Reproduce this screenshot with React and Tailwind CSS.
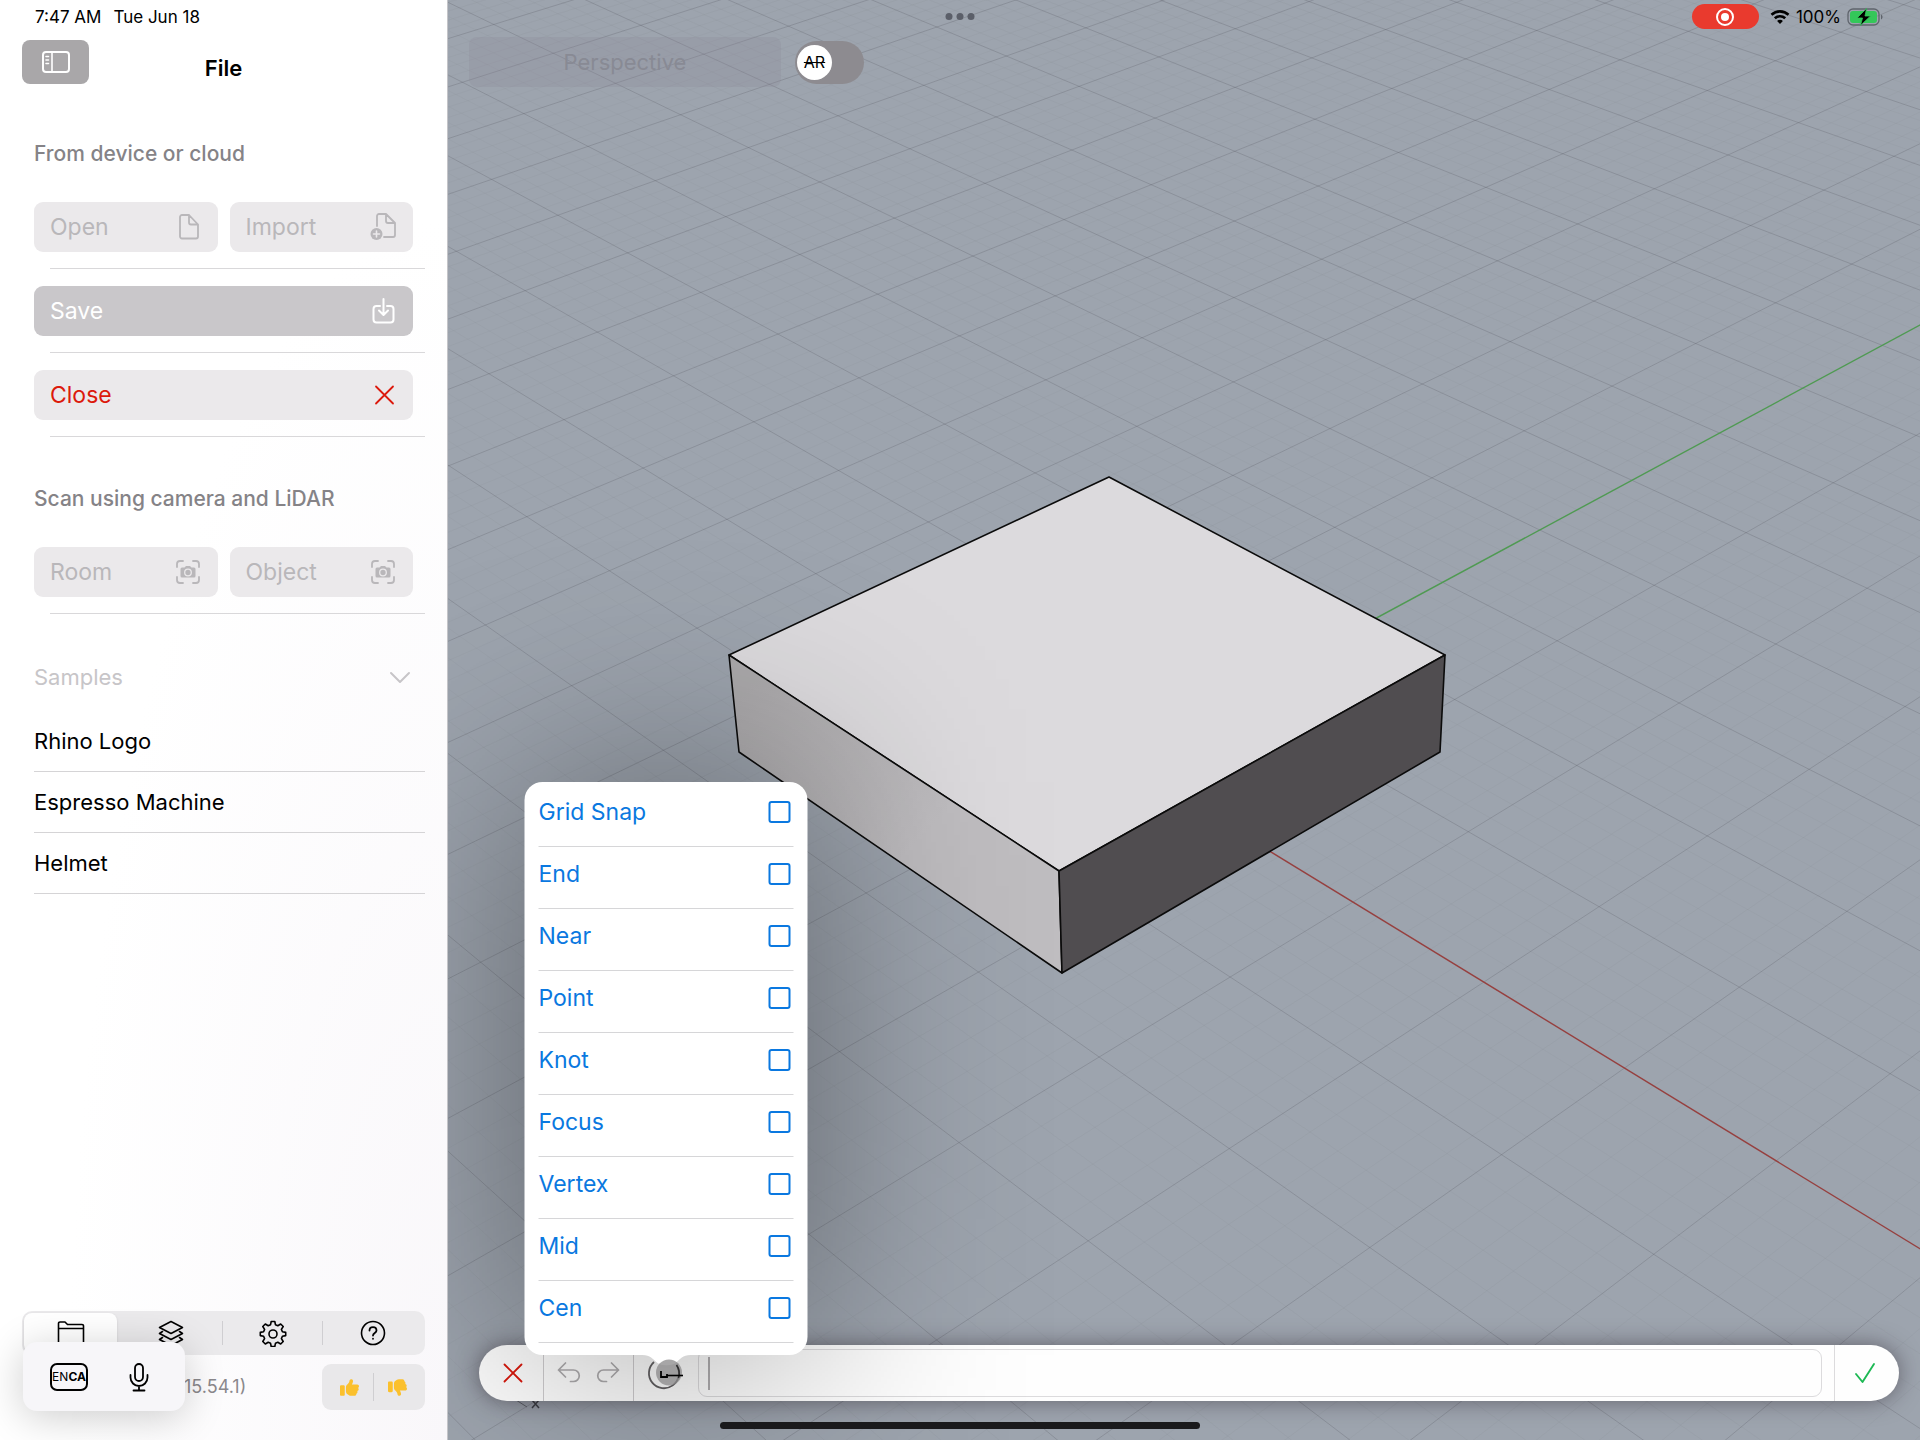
import { useState } from 'react';
import { FaThumbsUp, FaThumbsDown } from 'react-icons/fa6';

const SNAPS = ['Grid Snap', 'End', 'Near', 'Point', 'Knot', 'Focus', 'Vertex', 'Mid', 'Cen'];
const SAMPLES = ['Rhino Logo', 'Espresso Machine', 'Helmet'];

// Perspective of the construction plane: origin, the two vanishing points, size of one major cell
const ORIGIN = [1117, 757.8];
const VP_X = [-2255, -1304];
const VP_Y = [5147, -1414];
const STEP_X = 0.0327;
const STEP_Y = 0.0293;

function project(i, j) {
  const s = i * STEP_X;
  const t = j * STEP_Y;
  const w = 1 + s + t;
  return [0, 1].map(k => ((ORIGIN[k] + s * VP_X[k] + t * VP_Y[k]) / w).toFixed(1)).join(' ');
}

function gridPath(major) {
  const parts = [];
  for (let n = -45; n <= 85; n++) {
    if ((n % 5 === 0) !== major || n === 0) continue;
    const v = n / 5;
    parts.push(`M${project(v, -9)}L${project(v, 17)}`, `M${project(-9, v)}L${project(17, v)}`);
  }
  // the halves of the axes that are not coloured
  if (major) parts.push(`M${project(0, 0)}L${project(17, 0)}`, `M${project(0, 0)}L${project(0, -9)}`);
  return parts.join('');
}

const MAJOR = gridPath(true);
const MINOR = gridPath(false);

function Icon({ children, className = 'size-7', width = 1.5, box = 28 }) {
  return (
    <svg viewBox={`0 0 ${box} ${box}`} className={className} fill="none" stroke="currentColor" strokeWidth={width}
      strokeLinecap="round" strokeLinejoin="round" aria-hidden="true">
      {children}
    </svg>
  );
}

const SidebarIcon = () => (
  <Icon className="size-8" width={2} box={32}>
    <rect x="3" y="6" width="26" height="20" rx="3" />
    <path d="M12 6v20M6 10.500h2.500M6 14h2.500M6 17.500h2.500" strokeWidth="1.600" />
  </Icon>
);

const FileIcon = () => (
  <Icon width={1.8}>
    <path d="M8 2h7l9 9.500V23.500a2 2 0 0 1-2 2H8a2 2 0 0 1-2-2V4a2 2 0 0 1 2-2M15 2v7.500a2 2 0 0 0 2 2H24" />
  </Icon>
);

const ImportIcon = () => (
  <Icon width={1.8}>
    <path d="M8 13V3a2 2 0 0 1 2-2h7l9 9v12a2 2 0 0 1-2 2h-9M17 1v7a2 2 0 0 0 2 2h7" />
    <circle cx="7.500" cy="21" r="6" fill="currentColor" stroke="none" />
    <path d="M7.500 18v6M4.500 21h6" stroke="#ebe9eb" strokeWidth="1.600" />
  </Icon>
);

const SaveIcon = () => (
  <Icon width={2}>
    <path d="M11 9H7.500a3 3 0 0 0-3 3v10.500a3 3 0 0 0 3 3h14a3 3 0 0 0 3-3V12a3 3 0 0 0-3-3H18M14.500 2v15.500M10 13.500l4.500 4.500 4.500-4.500" />
  </Icon>
);

const CrossIcon = () => (
  <Icon width={1.8}>
    <path d="M7 5.500l17 17M24 5.500l-17 17" />
  </Icon>
);

const CameraIcon = () => (
  <Icon width={1.8}>
    <path d="M3 9V6a3 3 0 0 1 3-3h3M19 3h3a3 3 0 0 1 3 3v3M25 19v3a3 3 0 0 1-3 3h-3M9 25H6a3 3 0 0 1-3-3v-3" />
    <path d="M8 9.500h2.500L12 8h4l1.500 1.500H20a1.500 1.500 0 0 1 1.500 1.500v7a1.500 1.500 0 0 1-1.500 1.500H8A1.500 1.500 0 0 1 6.500 18v-7A1.500 1.500 0 0 1 8 9.500z" fill="currentColor" stroke="none" />
    <circle cx="14" cy="14.500" r="3.300" stroke="#ebe9eb" strokeWidth="1.300" />
  </Icon>
);

const TABS = [
  {
    label: 'File',
    icon: <path d="M1.500 26V4.500a1.500 1.500 0 0 1 1.500-1.500h5l2.500 2.500H25a1.500 1.500 0 0 1 1.500 1.500v19M1.500 9.500h25" />,
  },
  {
    label: 'Layers',
    icon: (
      <>
        <path d="M14 2.500L25.500 8.500 14 14.500 2.500 8.500z" />
        <path d="M5.500 12.500L2.500 14.500 14 20.500l11.500-6-3-2M5.500 18.500L2.500 20.500 14 26.500l11.500-6-3-2" />
      </>
    ),
  },
  {
    label: 'Settings',
    icon: (
      <>
        <path d="M12.200 2.500h3.600l.700 3.300 2.300 1 2.900-1.800 2.500 2.500-1.800 2.900 1 2.300 3.300.700v3.200l-3.300.700-1 2.300 1.800 2.900-2.500 2.500-2.900-1.800-2.300 1-.700 3.300h-3.600l-.700-3.300-2.300-1-2.900 1.800-2.500-2.500 1.800-2.900-1-2.300-3.300-.700v-3.200l3.300-.700 1-2.300-1.800-2.900 2.500-2.500 2.900 1.800 2.300-1z" />
        <circle cx="14" cy="15" r="4" />
      </>
    ),
  },
  {
    label: 'Help',
    icon: (
      <>
        <circle cx="14" cy="14" r="11.500" />
        <path d="M10.500 11.500c0-4.500 7-4.500 7 0 0 2.500-3.500 2.500-3.500 5M14 19.700v.100" strokeWidth="1.800" />
      </>
    ),
  },
];

function PanelButton({ label, icon, tone = 'muted' }) {
  const tones = {
    muted: 'bg-[#ebe9eb] text-[#b9b7ba]',
    solid: 'bg-[#c9c7ca] text-white',
    danger: 'bg-[#ebe9eb] text-[#dc190c]',
  };
  return (
    <button type="button" className={`flex h-[50px] flex-1 items-center justify-between rounded-[9px] px-4 text-[23px] leading-7 ${tones[tone]}`}>
      {label}
      {icon}
    </button>
  );
}

function PanelRow({ children }) {
  return (
    <div>
      <div className="flex gap-3 pt-[17px] pr-3 pb-4">{children}</div>
      <hr className="ml-4 border-[#d9d8da]" />
    </div>
  );
}

function Sidebar() {
  const [tab, setTab] = useState('File');
  return (
    <aside className="relative flex w-[448px] shrink-0 flex-col border-r border-[#c4c4c8] bg-[radial-gradient(ellipse_at_bottom_right,#f9f7fa,#ffffff_60%)] pr-[22px] pl-[22px]">
      <div className="flex h-[33px] items-center gap-3 pl-[13px] text-[17px] leading-5">
        <time>7:47 AM</time>
        <span>Tue Jun 18</span>
      </div>
      <header className="grid grid-cols-[67px_1fr_67px] items-start pt-[7px]">
        <button type="button" aria-label="Toggle sidebar" className="flex h-11 items-center justify-center rounded-lg bg-[#a9a7a9] text-white">
          <SidebarIcon />
        </button>
        <h1 className="pt-[14px] text-center text-[22px] leading-7 font-semibold">File</h1>
      </header>

      <div className="pl-3">
        <h2 className="mt-14 mb-[17px] text-[21px] leading-7 font-medium text-[#858387]">From device or cloud</h2>
        <PanelRow>
          <PanelButton label="Open" icon={<FileIcon />} />
          <PanelButton label="Import" icon={<ImportIcon />} />
        </PanelRow>
        <PanelRow>
          <PanelButton label="Save" icon={<SaveIcon />} tone="solid" />
        </PanelRow>
        <PanelRow>
          <PanelButton label="Close" icon={<CrossIcon />} tone="danger" />
        </PanelRow>

        <h2 className="mt-12 mb-[17px] text-[21px] leading-7 font-medium text-[#858387]">Scan using camera and LiDAR</h2>
        <PanelRow>
          <PanelButton label="Room" icon={<CameraIcon />} />
          <PanelButton label="Object" icon={<CameraIcon />} />
        </PanelRow>

        <button type="button" className="mt-[49px] flex w-full items-center justify-between pr-[11px] text-[22px] leading-7 text-[#c7c5c8]">
          Samples
          <Icon>
            <path d="M5 10l9 9 9-9" strokeWidth="2" />
          </Icon>
        </button>
        <ul className="mt-5">
          {SAMPLES.map(name => (
            <li key={name} className="border-b border-[#d5d4d6]">
              <button type="button" className="flex h-[60px] w-full items-center text-[22px] leading-7">{name}</button>
            </li>
          ))}
        </ul>
      </div>

      <footer className="mt-auto pb-[30px]">
        <nav className="flex h-11 rounded-[10px] bg-[#ebeaec] p-0.5">
          {TABS.map((t, i) => (
            <div key={t.label} className={`flex items-center ${i === 0 ? 'mr-1 w-[93px]' : 'flex-1'}`}>
              {i > 1 && <span className="h-6 w-px bg-[#cfced1]" />}
              <button type="button" aria-label={t.label} onClick={() => setTab(t.label)}
                className={`flex h-10 flex-1 items-center justify-center rounded-lg ${tab === t.label ? 'bg-white shadow' : ''}`}>
                <Icon width={1.6}>{t.icon}</Icon>
              </button>
            </div>
          ))}
        </nav>
        <div className="mt-[9px] flex h-[46px] items-center justify-between">
          <span className="pl-[162px] text-[18px] leading-6 text-[#8a888c]">15.54.1)</span>
          <div className="flex h-full w-[103px] items-center rounded-[9px] bg-[#e9e8ea] text-[#fbc02d]">
            <button type="button" aria-label="Good" className="flex flex-1 justify-center pl-1"><FaThumbsUp className="size-[19px]" /></button>
            <span className="h-7 w-px bg-[#cfced1]" />
            <button type="button" aria-label="Bad" className="flex flex-1 justify-center pr-1"><FaThumbsDown className="size-[19px]" /></button>
          </div>
        </div>
      </footer>

      {/* Floating keyboard shortcut bar */}
      <div className="absolute bottom-[29px] left-[23px] flex h-[69px] w-[162px] items-center justify-between rounded-[14px] bg-[#f7f6f9] pr-[30px] pl-[27px] shadow-[0_6px_40px_rgba(0,0,0,0.2)]">
        <button type="button" aria-label="Keyboard language" className="flex h-7 w-[38px] items-center justify-center rounded-[7px] border-2 border-black text-[12px] leading-4">
          EN<b>CA</b>
        </button>
        <button type="button" aria-label="Dictate">
          <Icon className="size-8" width={1.8} box={32}>
            <rect x="12" y="3" width="8" height="17" rx="4" />
            <path d="M7.500 14v2.500a8.500 8.500 0 0 0 17 0V14M16 25v4M10.500 29.500h11" />
          </Icon>
        </button>
      </div>
    </aside>
  );
}

function Scene() {
  return (
    <svg viewBox="448 0 1472 1440" preserveAspectRatio="xMidYMid slice" className="absolute inset-0 size-full" aria-hidden="true">
      <linearGradient id="side" gradientUnits="userSpaceOnUse" x1="735" y1="700" x2="900" y2="860">
        <stop offset="0" stopColor="#acaaac" />
        <stop offset="1" stopColor="#bfbdc0" />
      </linearGradient>
      <rect x="448" width="1472" height="1440" fill="#9da4ae" />
      <path d={MINOR} stroke="#4a4752" strokeOpacity="0.040" />
      <path d={MAJOR} stroke="#4a4752" strokeOpacity="0.220" />
      <path d={`M${project(0, 0)}L${project(0, 17)}`} stroke="#4f9a52" strokeWidth="1.400" />
      <path d={`M${project(0, 0)}L${project(-9, 0)}`} stroke="#96403f" strokeWidth="1.400" />
      <g stroke="#0b0b0b" strokeWidth="1.600" strokeLinejoin="round">
        <path d="M729 655L1109 477L1445 655L1059 871z" fill="#dcdadd" />
        <path d="M729 655L1059 871L1062 973L739 752z" fill="url(#side)" />
        <path d="M1059 871L1445 655L1440 752L1062 973z" fill="#504d50" />
      </g>
      <path d="M516 1400L527 1407" stroke="#5f636a" />
      <path d="M532 1400L539 1408M539 1400L532 1408" stroke="#3c3f45" strokeWidth="1.500" />
    </svg>
  );
}

function SnapMenu() {
  const [on, setOn] = useState({});
  return (
    <div className="absolute bottom-[46px] left-1/2 w-[283px] -translate-x-1/2">
      <div className="pointer-events-none absolute inset-0 bg-black/40 blur-[110px]" />
      <div className="relative rounded-[18px] bg-white px-[14px] pt-[3px] pb-3">
        {SNAPS.map(name => (
          <label key={name} className="flex h-[62px] items-center justify-between border-b border-[#d6d6d8] pr-[3px] pb-2 text-[23px] leading-7 text-[#0a78e0]">
            {name}
            <input type="checkbox" checked={!!on[name]} onChange={e => setOn({ ...on, [name]: e.target.checked })}
              className="size-[22px] appearance-none rounded-[3px] border-2 border-[#0a78e0] checked:bg-[#0a78e0]" />
          </label>
        ))}
        <svg viewBox="0 0 48 12" className="absolute top-full left-1/2 h-3 w-12 -translate-x-1/2" fill="white" aria-hidden="true">
          <path d="M0 0c8 0 10 4 15 8 4 3 14 3 18 0C38 4 40 0 48 0z" />
        </svg>
      </div>
    </div>
  );
}

function CommandBar() {
  return (
    <form className="relative mr-[21px] mb-[39px] ml-[31px] flex h-14 items-stretch rounded-full bg-[#fefefe] shadow-[0_0_22px_rgba(40,30,40,0.5)]" onSubmit={e => e.preventDefault()}>
      <button type="button" aria-label="Cancel" className="flex w-16 items-center justify-center pl-1 text-[#d9160a]">
        <Icon width={1.8}>
          <path d="M5.500 5.500l17 17M22.500 5.500l-17 17" />
        </Icon>
      </button>
      <div className="flex w-[91px] items-center justify-around border-x border-[#cfcdcf] px-1.5 text-[#aeacae]">
        <button type="button" aria-label="Undo">
          <Icon>
            <path d="M10.500 4L3.500 11l7 7M3.500 11h15a5.700 5.700 0 0 1 0 11.500h-3" strokeWidth="1.700" />
          </Icon>
        </button>
        <button type="button" aria-label="Redo">
          <Icon>
            <path d="M17.500 4l7 7-7 7M24.500 11h-15a5.700 5.700 0 0 0 0 11.500h3" strokeWidth="1.700" />
          </Icon>
        </button>
      </div>
      <div className="relative flex w-16 items-center justify-center">
        <SnapMenu />
        <button type="button" aria-label="Object snaps" className="relative">
          <svg viewBox="0 0 44 44" className="size-11" fill="none" aria-hidden="true">
            <path d="M10 11A15 15 0 1 0 32.500 14" stroke="#555355" strokeWidth="1.800" />
            <circle cx="25" cy="21.500" r="13" fill="#8a888a" fillOpacity="0.750" />
            <path d="M32.500 14a15 15 0 0 1 2 13" stroke="#2e2d2e" strokeWidth="1.600" />
            <path d="M17 20v6h6v-3" stroke="#000" strokeWidth="1.800" />
            <path d="M23 24.500h16" stroke="#000" strokeWidth="1.600" />
          </svg>
        </button>
      </div>
      <label className="my-1 flex flex-1 items-center rounded-[9px] border border-[#dcdbdd] pl-[9px]">
        <span className="h-[33px] w-[2px] bg-[#b0aeb0]" />
        <input type="text" aria-label="Command" className="h-full min-w-0 flex-1 bg-transparent px-2 text-[23px] outline-none" />
      </label>
      <button type="submit" aria-label="Accept" className="ml-3 flex w-[65px] items-center justify-center border-l border-[#dcdbdd] pr-1 text-[#1db954]">
        <Icon>
          <path d="M5 15l6.500 8L23 5" strokeWidth="1.900" />
        </Icon>
      </button>
    </form>
  );
}

function StatusIcons() {
  return (
    <div className="flex h-[33px] items-center justify-end pr-[37px]">
      <span className="flex h-[25px] w-[67px] items-center justify-center rounded-full bg-[#e93a2e]">
        <svg viewBox="0 0 20 20" className="size-5" aria-hidden="true">
          <circle cx="10" cy="10" r="8" fill="none" stroke="white" strokeWidth="2" />
          <circle cx="10" cy="10" r="4" fill="white" />
        </svg>
      </span>
      <svg viewBox="0 0 20 16" className="ml-[11px] h-4 w-5" fill="none" stroke="black" strokeWidth="2.600" aria-hidden="true">
        <path d="M1.500 5.800a12.200 12.200 0 0 1 17 0M4.800 9.300a7.500 7.500 0 0 1 10.400 0" />
        <path d="M10 15l-2.900-3a4 4 0 0 1 5.800 0z" fill="black" stroke="none" />
      </svg>
      <span className="mx-[6px] text-[17px] leading-5">100%</span>
      <svg viewBox="0 0 36 20" className="h-5 w-9" aria-hidden="true">
        <rect x="1" y="2" width="31" height="16" rx="5" fill="none" stroke="#5f646c" strokeWidth="1.300" />
        <rect x="3" y="4" width="27" height="12" rx="3" fill="#34c759" />
        <path d="M34 7.500c2 .800 2 4.200 0 5z" fill="#5f646c" />
        <path d="M19.500 1.500L10 11h5.500l-2 7.500L23.500 9H18z" fill="black" stroke="#34c759" strokeWidth="0.800" />
      </svg>
    </div>
  );
}

function Viewport() {
  return (
    <main className="relative flex min-w-0 flex-1 flex-col overflow-hidden">
      <Scene />
      <div className="relative">
        <StatusIcons />
        <div className="flex items-center gap-[14px] pt-1 pl-[21px]">
          <button type="button" className="h-[50px] w-[312px] rounded-lg bg-[#8c8696]/25 text-[22px] leading-7 text-[#888a94]">Perspective</button>
          <label className="flex h-[43px] w-[69px] cursor-pointer items-center rounded-full bg-[#8d8b90] px-[2px]">
            <input type="checkbox" role="switch" aria-label="Augmented reality" className="sr-only" />
            <span className="flex size-[35px] items-center justify-center rounded-full bg-white text-[16px] leading-5 line-through">AR</span>
          </label>
        </div>
      </div>
      <div className="relative mt-auto">
        <CommandBar />
      </div>
    </main>
  );
}

export default function App() {
  return (
    <div className="relative flex min-h-screen bg-white font-[Inter,'Liberation_Sans',sans-serif] text-black">
      <Sidebar />
      <Viewport />
      {/* Multitasking dots and home indicator */}
      <div className="absolute top-[13px] left-1/2 flex -translate-x-1/2 gap-1">
        <span className="size-[7px] rounded-full bg-[#5b5f69]" />
        <span className="size-[7px] rounded-full bg-[#5b5f69]" />
        <span className="size-[7px] rounded-full bg-[#5b5f69]" />
      </div>
      <div className="absolute bottom-[11px] left-1/2 h-[7px] w-[480px] -translate-x-1/2 rounded-full bg-[#1a1a1c]" />
    </div>
  );
}
